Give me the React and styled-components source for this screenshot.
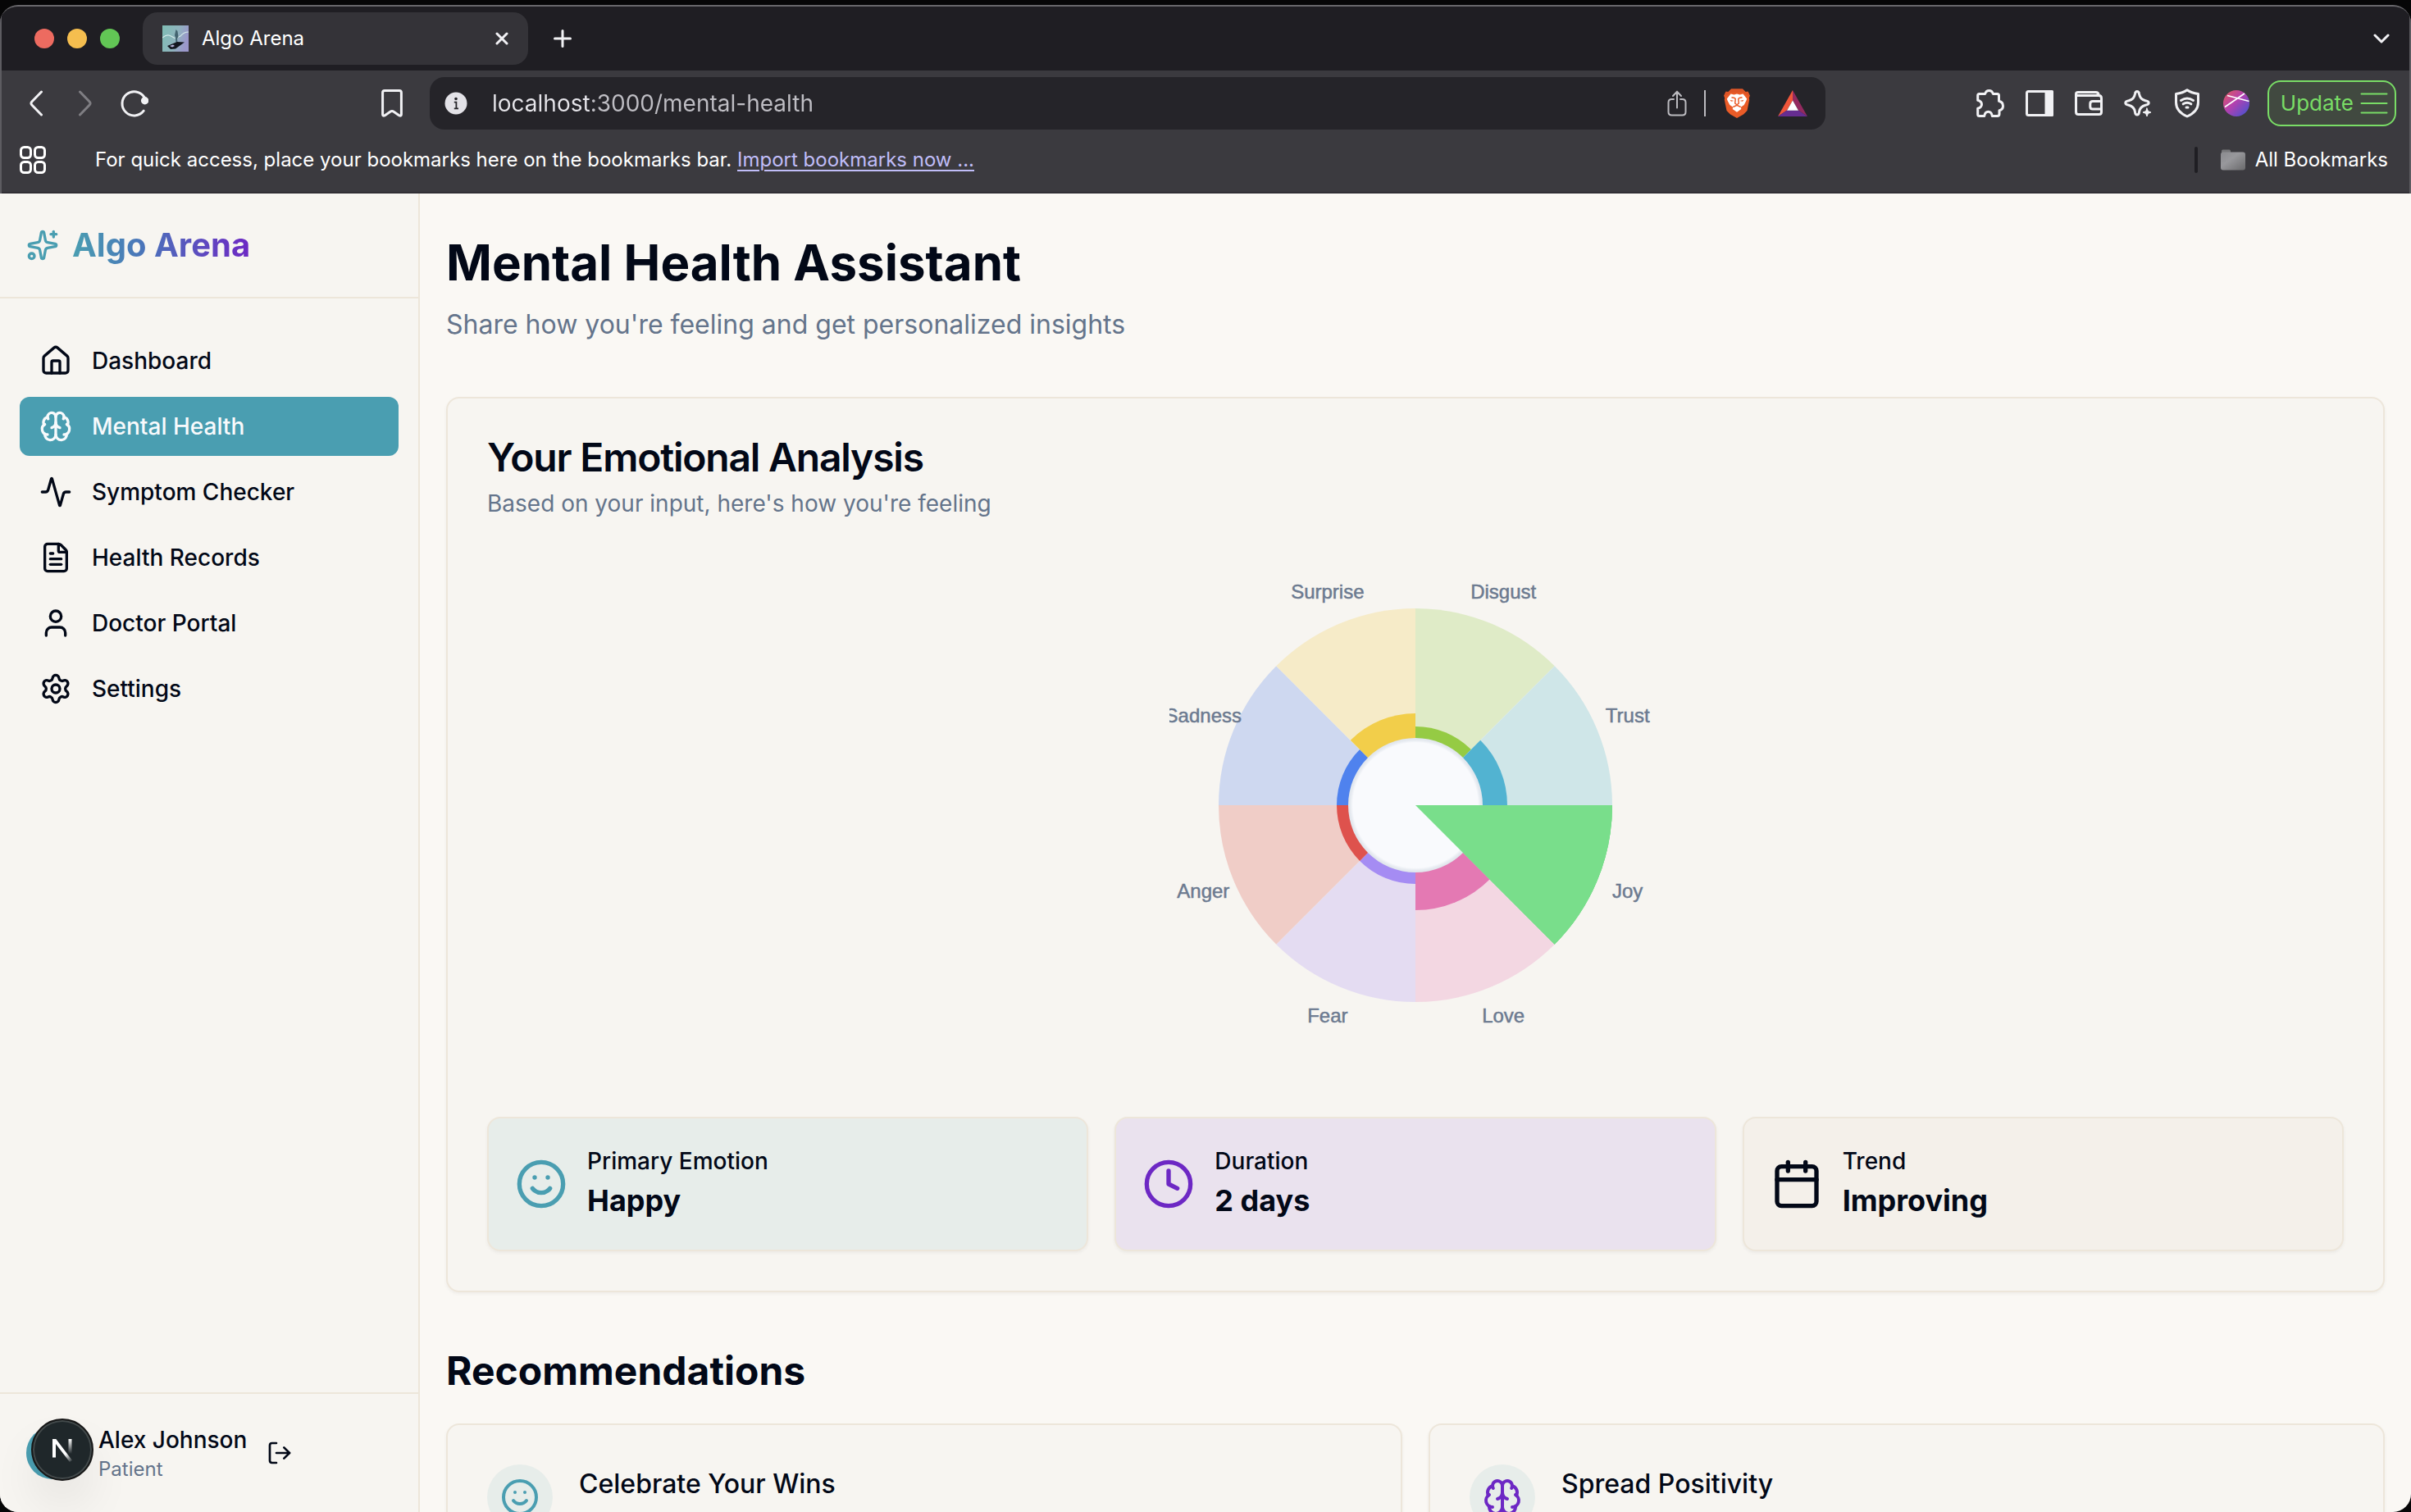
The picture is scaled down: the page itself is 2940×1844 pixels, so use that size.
import React from "react";
import styled, { createGlobalStyle, css } from "styled-components";
import {
  Activity,
  Brain,
  Calendar,
  Clock,
  FileText,
  House,
  LogOut,
  Settings,
  Smile,
  Sparkles,
  User,
} from "lucide-react";

const color = {
  ink: "#020817",
  muted: "#64748b",
  teal: "#4a9eb1",
  purple: "#6d28c4",
  page: "#faf8f4",
  panel: "#f7f5f1",
  line: "#ede6da",
  chromeDark: "#1f1e23",
  chrome: "#3b3a3f",
  field: "#252429",
  green: "#79dd66",
};

const GlobalStyle = createGlobalStyle`
  *, *::before, *::after { box-sizing: border-box; }
  html, body { margin: 0; background: #060607; overflow: hidden; }
  body { font-family: Inter, "Liberation Sans", sans-serif; color: ${color.ink}; }
  h1, h2, h3, p, ul { margin: 0; padding: 0; }
  a { color: inherit; text-decoration: none; }
  button, input { font: inherit; color: inherit; border: 0; background: none; padding: 0; margin: 0; }
  svg { display: block; flex: none; }
`;

const Screen = styled.div`
  height: 100vh;
  padding-top: 6px;
  overflow: hidden;
`;

const BrowserWindow = styled.div`
  height: 100%;
  display: flex;
  flex-direction: column;
  border-top: 2px solid #68676b;
  border-radius: 22px;
  overflow: hidden;
  background: ${color.chrome};
`;

/* Browser chrome */

const ChromeFrame = styled.header`
  flex: none;
  border: solid #5d5c61;
  border-width: 0 2px;
`;

const TabStrip = styled.div`
  height: 78px;
  padding: 0 12px 0 40px;
  display: flex;
  align-items: center;
  background: ${color.chromeDark};
`;

const Lights = styled.div`
  display: flex;
  gap: 16px;
`;

const Light = styled.span`
  width: 24px;
  height: 24px;
  border-radius: 50%;
  background: ${(p) => p.$fill};
`;

const Tab = styled.div`
  width: 470px;
  height: 64px;
  margin: 0 20px 0 28px;
  padding: 0 16px 0 24px;
  border-radius: 18px;
  background: #343338;
  display: flex;
  align-items: center;
  gap: 16px;
`;

const TabTitle = styled.span`
  flex: 1;
  font-size: 24px;
  line-height: 32px;
  color: #fff;
`;

const IconButton = styled.button`
  flex: none;
  width: ${(p) => p.$size || 60}px;
  height: ${(p) => p.$size || 60}px;
  display: grid;
  place-items: center;
  color: ${(p) => (p.$dim ? "#7f7e83" : "#f1f1f4")};
`;

const Push = styled.span`
  flex: 1;
`;

const Toolbar = styled.div`
  height: 80px;
  padding: 0 16px 0 12px;
  display: flex;
  align-items: center;
`;

const ToolbarStart = styled.div`
  width: 510px;
  flex: none;
  padding-right: 16px;
  display: flex;
`;

const ToolbarEnd = styled.div`
  width: 696px;
  flex: none;
  display: flex;
  align-items: center;
  justify-content: flex-end;
`;

const AddressBar = styled.form`
  flex: 1;
  min-width: 0;
  height: 64px;
  padding: 0 10px 0 18px;
  border-radius: 18px;
  background: ${color.field};
  display: flex;
  align-items: center;
`;

/* The host part of the address is brighter than the path. */
const AddressInput = styled.input`
  flex: 1;
  min-width: 0;
  margin-left: 30px;
  height: 40px;
  font-size: 28px;
  line-height: 40px;
  outline: none;
  background: linear-gradient(90deg, #e6e5ea 122px, #bfbec4 122px);
  background-clip: text;
  -webkit-background-clip: text;
  -webkit-text-fill-color: transparent;
`;

const AddressButton = styled.button`
  height: 40px;
  width: ${(p) => p.$width}px;
  display: grid;
  place-items: center;
  color: #bcbbc0;
`;

const AddressRule = styled.span`
  width: 2px;
  height: 32px;
  background: #bcbbc0;
`;

const UpdateButton = styled.button`
  height: 56px;
  margin-left: 8px;
  padding: 0 8px 0 14px;
  border: 2px solid ${color.green};
  border-radius: 16px;
  background: #414940;
  color: ${color.green};
  font-size: 26px;
  line-height: 32px;
  display: flex;
  align-items: center;
  gap: 8px;
`;

const BookmarksBar = styled.div`
  height: 70px;
  padding: 0 26px 10px 22px;
  border-bottom: 2px solid #312f35;
  display: flex;
  align-items: center;
  font-size: 24px;
  line-height: 32px;
  color: #fff;
`;

const BookmarkHint = styled.p`
  margin-left: 60px;
`;

const ImportLink = styled.a`
  color: #c0bdf8;
  text-decoration: underline;
  text-underline-offset: 4px;
  text-decoration-thickness: 2px;
`;

const BarRule = styled.span`
  width: 4px;
  height: 32px;
  margin-right: 28px;
  border-radius: 2px;
  background: ${color.chromeDark};
`;

const AllBookmarks = styled.button`
  display: flex;
  align-items: center;
  gap: 12px;
`;

/* Page */

const Page = styled.div`
  flex: 1;
  min-height: 0;
  display: flex;
  background: ${color.page};
`;

const Sidebar = styled.aside`
  width: 512px;
  flex: none;
  display: flex;
  flex-direction: column;
  background: ${color.panel};
  border-right: 2px solid ${color.line};
`;

const Brand = styled.a`
  height: 128px;
  padding: 0 32px;
  display: flex;
  align-items: center;
  gap: 16px;
  color: ${color.teal};
  border-bottom: 2px solid ${color.line};
`;

const BrandName = styled.span`
  font-size: 40px;
  line-height: 56px;
  font-weight: 700;
  color: transparent;
  background: linear-gradient(90deg, ${color.teal}, #4a74ba 40%, ${color.purple});
  background-clip: text;
  -webkit-background-clip: text;
`;

const Nav = styled.nav`
  flex: 1;
  padding: 40px 24px;
  display: flex;
  flex-direction: column;
  gap: 8px;
`;

const NavLink = styled.a`
  height: 72px;
  padding: 0 24px;
  display: flex;
  align-items: center;
  gap: 24px;
  border-radius: 12px;
  font-size: 28px;
  line-height: 40px;
  font-weight: 500;
  ${(p) =>
    p.$active &&
    css`
      background: ${color.teal};
      color: #f8fafc;
    `}
`;

const Account = styled.div`
  padding: 32px;
  display: flex;
  align-items: center;
  border-top: 2px solid ${color.line};
`;

const Avatar = styled.div`
  position: relative;
  width: 64px;
  height: 64px;
  margin-right: 24px;
  border-radius: 50%;
  background: ${color.teal};
`;

const DevBadge = styled.button`
  position: absolute;
  left: 6px;
  top: -10px;
  width: 76px;
  height: 76px;
  border-radius: 50%;
  border: 2px solid #171717;
  background: #1f272a;
  box-shadow: inset 0 0 0 2px #434a4b, 0 32px 64px -16px rgba(0, 0, 0, 0.2);
  display: grid;
  place-items: center;
`;

const AccountName = styled.p`
  font-size: 28px;
  line-height: 40px;
  font-weight: 500;
`;

const AccountRole = styled.p`
  font-size: 24px;
  line-height: 32px;
  color: ${color.muted};
`;

const LogoutButton = styled(IconButton)`
  color: ${color.ink};
`;

const Main = styled.main`
  flex: 1;
  min-width: 0;
  padding: 48px 32px;
  overflow: hidden;
`;

const PageTitle = styled.h1`
  font-size: 60px;
  line-height: 72px;
  font-weight: 700;
`;

const PageIntro = styled.p`
  margin: 16px 0 64px;
  font-size: 32px;
  line-height: 48px;
  color: ${color.muted};
`;

const Card = styled.section`
  border: 2px solid ${color.line};
  border-radius: 16px;
  background: ${(p) => p.$fill || color.panel};
  box-shadow: 0 2px 4px rgba(0, 0, 0, 0.05);
  padding: ${(p) => p.$pad || 48}px;
`;

const CardTitle = styled.h2`
  font-size: 48px;
  line-height: 48px;
  font-weight: 600;
  letter-spacing: -0.025em;
`;

const CardNote = styled.p`
  margin: 12px 0 48px;
  font-size: 28px;
  line-height: 40px;
  color: ${color.muted};
`;

const ChartBox = styled.div`
  display: flex;
  justify-content: center;
  margin-bottom: 80px;
`;

const ChartLabel = styled.text`
  font-family: "Liberation Sans", Arial, sans-serif;
  font-size: 24px;
  fill: #6c7a90;
  stroke: #6c7a90;
  stroke-width: 0.5;
  text-anchor: middle;
  dominant-baseline: middle;
`;

const Grid = styled.div`
  display: grid;
  grid-template-columns: repeat(${(p) => p.$cols}, minmax(0, 1fr));
  gap: 32px;
`;

const StatRow = styled.div`
  display: flex;
  align-items: center;
  gap: 24px;
  color: ${(p) => p.$tone};
`;

const StatLabel = styled.p`
  font-size: 28px;
  line-height: 40px;
  font-weight: 500;
  color: ${color.ink};
`;

const StatValue = styled.p`
  font-size: 36px;
  line-height: 56px;
  font-weight: 700;
  color: ${color.ink};
`;

const SectionTitle = styled.h2`
  margin: 64px 0 32px;
  font-size: 48px;
  line-height: 64px;
  font-weight: 700;
`;

const TipRow = styled.div`
  display: flex;
  align-items: flex-start;
  gap: 32px;
`;

const TipIcon = styled.div`
  flex: none;
  width: 80px;
  height: 80px;
  border-radius: 50%;
  display: grid;
  place-items: center;
  background: #e7edea;
  color: ${(p) => p.$tone};
`;

const TipTitle = styled.h3`
  font-size: 32px;
  line-height: 48px;
  font-weight: 500;
`;

/* Emotion wheel */

const emotions = [
  { name: "Joy", pale: "#79de8b", strong: "#79de8b", reach: 240 },
  { name: "Love", pale: "#f3d7e2", strong: "#e479b3", reach: 128 },
  { name: "Fear", pale: "#e4dcf2", strong: "#a58cf3", reach: 96 },
  { name: "Anger", pale: "#f0cdc7", strong: "#de524d", reach: 96 },
  { name: "Sadness", pale: "#ced8f0", strong: "#4f82ee", reach: 96 },
  { name: "Surprise", pale: "#f6ebc8", strong: "#f2ce4a", reach: 112 },
  { name: "Disgust", pale: "#dfebc7", strong: "#95cb44", reach: 96 },
  { name: "Trust", pale: "#cfe6e8", strong: "#52b3d1", reach: 112 },
];

const point = (radius, degrees) => {
  const a = (degrees * Math.PI) / 180;
  return `${(300 + radius * Math.cos(a)).toFixed(2)} ${(300 + radius * Math.sin(a)).toFixed(2)}`;
};

const wedge = (radius, index) =>
  `M300 300L${point(radius, index * 45)}A${radius} ${radius} 0 0 1 ${point(radius, index * 45 + 45)}Z`;

function EmotionWheel() {
  return (
    <svg width="600" height="600" viewBox="0 0 600 600" role="img" aria-label="Emotion wheel">
      <defs>
        <radialGradient id="hub" cx="300" cy="300" r="82" gradientUnits="userSpaceOnUse">
          <stop offset="0.93" stopColor="#f9fafd" />
          <stop offset="0.97" stopColor="#e6eaf0" />
          <stop offset="1" stopColor="#dfe5ec" />
        </radialGradient>
      </defs>
      {emotions.map((e, i) => (
        <path key={e.name} d={wedge(240, i)} fill={e.pale} />
      ))}
      {emotions.map((e, i) => (
        <path key={e.name} d={wedge(e.reach, i)} fill={e.strong} />
      ))}
      <circle cx="300" cy="300" r="82" fill="url(#hub)" />
      <path d={wedge(240, 0)} fill={emotions[0].strong} />
      {emotions.map((e, i) => {
        const [x, y] = point(280, i * 45 + 22.5).split(" ");
        return (
          <ChartLabel key={e.name} x={x} y={y}>
            {e.name}
          </ChartLabel>
        );
      })}
    </svg>
  );
}

/* Browser icons */

const Line = ({ w = 34, h = w, box = `0 0 ${w} ${h}`, sw = 3, children }) => (
  <svg
    width={w}
    height={h}
    viewBox={box}
    fill="none"
    stroke="currentColor"
    strokeWidth={sw}
    strokeLinecap="round"
    strokeLinejoin="round"
    aria-hidden="true"
  >
    {children}
  </svg>
);

const BackIcon = () => (
  <Line w={16} h={32}>
    <path d="M14.5 2L2.6 14.3q-1.3 1.7 0 3.4L14.5 30" />
  </Line>
);
const ForwardIcon = () => (
  <Line w={16} h={32}>
    <path d="M1.5 2L13.4 14.3q1.3 1.7 0 3.4L1.5 30" />
  </Line>
);
const ReloadIcon = () => (
  <Line w={34}>
    <path d="M28.2 26.2A14.6 14.6 0 1 1 29 9.6L30.5 13" />
    <circle cx="29.6" cy="13.8" r="3.2" fill="currentColor" />
  </Line>
);
const BookmarkIcon = () => (
  <Line w={26} h={34}>
    <path d="M4 1.6h18q2.4 0 2.4 2.4v26.5q0 2.4-2.4 1.4L15.5 27.4q-2.5-1.6-5 0L4 31.9q-2.4 1-2.4-1.4V4Q1.6 1.6 4 1.6z" />
  </Line>
);
const GridIcon = () => (
  <Line w={32} h={34}>
    <rect x="1.5" y="1.5" width="12" height="13" rx="4" />
    <rect x="18.5" y="1.5" width="12" height="13" rx="4" />
    <rect x="1.5" y="19.5" width="12" height="13" rx="4" />
    <rect x="18.5" y="19.5" width="12" height="13" rx="4" />
  </Line>
);
const InfoIcon = () => (
  <svg width="28" height="28" viewBox="0 0 28 28" aria-hidden="true">
    <circle cx="14" cy="14" r="13.5" fill="#e3e2e7" />
    <circle cx="14" cy="8.5" r="1.8" fill="#252429" />
    <path d="M11.8 12.7H14.4V20.3M11.8 20.3H17" stroke="#252429" strokeWidth="1.8" fill="none" />
  </svg>
);
const ShareIcon = () => (
  <Line w={24} h={32} sw={2}>
    <path d="M8 11H5.5Q1.5 11 1.5 15v11.5Q1.5 30.5 5.5 30.5h13q4 0 4-4V15q0-4-4-4H16M12 21.500V1.800M7 7l5-5.300L17 7" />
  </Line>
);
const BraveIcon = () => (
  <svg width="32" height="36" viewBox="0 0 32 36" aria-hidden="true">
    <path d="M9 0.5h14l3.5 3.5 3-0.3 2.300 5-1 3 0.400 2L28.500 27 24 31.500 16 36 8 31.500 3.500 27 0.800 13.700l0.400-2-1-3 2.300-5L5.500 4z" fill="#ea5c28" />
    <path d="M9 0.500h14l3.500 3.500 3-0.300 2.300 5-2 0.500L24 5H8L2.200 9.200l-2-0.500 2.300-5L5.500 4z" fill="#dd5527" />
    <path d="M8.500 6.500l4 0.900 3.500-0.900 3.500 0.900 4-0.900 4.700 6-0.900 2.600-2.600 4.800-4 2.800 0.600 2.300L16 28.800 10.700 25l0.600-2.300L7.300 19.900l-2.600-4.800L3.800 12.500z" fill="#fff" />
    <path d="M9.500 10.800l3.500 0.700 1.200 1-0.500 5.500 2.300 1.800 2.300-1.800-0.500-5.500 1.200-1 3.500-0.700M11.300 22.500L16 20.300l4.700 2.200" fill="none" stroke="#ea5c28" strokeWidth="1.500" />
    <path d="M7.500 13.800l5 1.300-3.500 0.600zM24.500 13.800l-5 1.300 3.500 0.600z" fill="#ea5c28" />
  </svg>
);
const RewardsIcon = () => (
  <svg width="36" height="32" viewBox="0 0 36 32" aria-hidden="true">
    <path d="M18 0L0 32l11-7.500L18 12.500z" fill="#f0563a" />
    <path d="M18 0l18 32-11-7.500L18 12.500z" fill="#932a5f" />
    <path d="M0 32h36l-11-7.500H11z" fill="#662d91" />
    <path d="M18 12.500l7 12.300H11z" fill="#fff" />
  </svg>
);
const PuzzleIcon = () => (
  <Line w={34} h={34}>
    <path d="M3.500 5.500h7.200q1-4 4.800-4t4.800 4h5.200q2 0 2 2v6.800q5 1.200 5 6 0 4.300-4.500 5.500v4.200q0 2.500-2.500 2.500h-6.200q-0.700-5.300-4.800-5.300t-4.800 5.300H3.700q-2 0-2-2v-7.200q4.800-1.300 4.800-5t-4.800-5V7.500q0-2 1.800-2z" />
  </Line>
);
const PanelIcon = () => (
  <Line w={34} h={32}>
    <rect x="1.500" y="1.500" width="31" height="29" rx="2" />
    <path d="M25 1.500h7.500v29H25z" fill="currentColor" />
  </Line>
);
const WalletIcon = () => (
  <Line w={34} h={30}>
    <path d="M1.500 4v21.500q0 3 3 3h25q3 0 3-3V9q0-3.500-3-3.500H4Q1.500 5.500 1.500 3.500T4 1.500h21.500q3.500 0 3.800 4M32.500 12.500H21.800q-3 0-3 3V19q0 3 3 3h10.700" />
  </Line>
);
const StarIcon = () => (
  <Line w={34}>
    <path d="M16 2.500q2.200 0 2.600 3.200 1 6.400 7.600 8 4 0.800 4 2.800t-4 2.800q-6.600 1.600-7.600 8-0.400 3.700-2.600 3.700t-2.600-3.700q-1-6.400-7.600-8-4-0.800-4-2.800t4-2.800q6.600-1.600 7.600-8Q13.800 2.500 16 2.500z" />
    <path d="M28 23l1.400 3.600L33 28l-3.600 1.400L28 33l-1.400-3.600L23 28l3.600-1.400z" fill="currentColor" strokeWidth="1" />
  </Line>
);
const VpnIcon = () => (
  <Line w={30} h={36}>
    <path d="M15 1.800q5 3.800 13.500 4.700v10.500q0 11-13.500 17Q1.500 28 1.500 17V6.500Q10 5.600 15 1.800z" />
    <path d="M7.500 14.500q7.500-5 15 0M10.200 18.800q4.800-3.200 9.600 0M14 23h2" />
  </Line>
);
const ProfileIcon = () => (
  <svg width="32" height="32" viewBox="0 0 32 32" aria-hidden="true">
    <defs>
      <linearGradient id="profile" x1="0" y1="0" x2="1" y2="1">
        <stop offset="0.100" stopColor="#d8566c" />
        <stop offset="0.450" stopColor="#b440ae" />
        <stop offset="0.950" stopColor="#4653d2" />
      </linearGradient>
    </defs>
    <circle cx="16" cy="16" r="16" fill="url(#profile)" />
    <path d="M5 6.500L31.500 13.500M2 20.500L26 4" stroke="#fff" strokeWidth="1.600" />
  </svg>
);
const MenuLines = () => (
  <Line w={34} h={26} sw={2}>
    <path d="M1.500 1.500h31M1.500 13h31M1.500 24.500h31" />
  </Line>
);
const CloseIcon = () => (
  <Line w={16} h={16}>
    <path d="M2 2l12 12M14 2L2 14" />
  </Line>
);
const PlusIcon = () => (
  <Line w={22} h={22}>
    <path d="M11 1.500v19M1.500 11h19" />
  </Line>
);
const ChevronIcon = () => (
  <Line w={20} h={12}>
    <path d="M2 2l8 8 8-8" />
  </Line>
);
const FolderIcon = () => (
  <svg width="30" height="26" viewBox="0 0 30 26" aria-hidden="true">
    <defs>
      <linearGradient id="folder" x1="0" y1="0" x2="1" y2="1">
        <stop offset="0" stopColor="#8b8b8f" />
        <stop offset="0.400" stopColor="#98989c" />
        <stop offset="1" stopColor="#69696b" />
      </linearGradient>
    </defs>
    <path d="M1 6V2q0-1.500 1.500-1.500h8q1.500 0 1.500 2V6z" fill="#77777a" />
    <rect y="3.500" width="30" height="22" rx="3" fill="url(#folder)" />
  </svg>
);
const Favicon = () => (
  <svg width="32" height="32" viewBox="0 0 32 32" aria-hidden="true">
    <defs>
      <linearGradient id="fav" x1="0" y1="0" x2="1" y2="0.300">
        <stop offset="0" stopColor="#7fbdb4" />
        <stop offset="0.600" stopColor="#8fb4bd" />
        <stop offset="1" stopColor="#9b98cb" />
      </linearGradient>
    </defs>
    <rect width="32" height="32" fill="url(#fav)" />
    <path d="M0 15q5-4 8-3t6 3q3 1 8-2 4-5 10-5" fill="none" stroke="#d5ebea" strokeWidth="1.200" />
    <path d="M16.500 5l2 2 1 7-1.500 2 0.500 5h-2l-0.500-6-1-3z" fill="#43636f" />
    <path d="M6 25l12-5 9 0.500-11 8-6 0.500z" fill="#14171f" />
    <path d="M9 25l4-1.500 2 1.500-3 1.500z" fill="#b9b7dd" />
  </svg>
);
const NextMark = () => (
  <svg width="28" height="30" viewBox="0 0 28 30" aria-hidden="true">
    <defs>
      <linearGradient id="nextStem" x1="0" y1="0" x2="0" y2="1">
        <stop offset="0" stopColor="#fff" />
        <stop offset="1" stopColor="#fff" stopOpacity="0" />
      </linearGradient>
      <linearGradient id="nextSlash" x1="3" y1="2" x2="26" y2="30" gradientUnits="userSpaceOnUse">
        <stop offset="0.650" stopColor="#fff" />
        <stop offset="1" stopColor="#fff" stopOpacity="0" />
      </linearGradient>
    </defs>
    <rect x="21.500" y="2" width="4" height="18" fill="url(#nextStem)" />
    <path d="M2 24.500V2h4.300L26 28l-3 2L6 8v16.500z" fill="url(#nextSlash)" />
  </svg>
);

const navItems = [
  { label: "Dashboard", icon: House, href: "#dashboard" },
  { label: "Mental Health", icon: Brain, href: "#mental-health", active: true },
  { label: "Symptom Checker", icon: Activity, href: "#symptom-checker" },
  { label: "Health Records", icon: FileText, href: "#health-records" },
  { label: "Doctor Portal", icon: User, href: "#doctor-portal" },
  { label: "Settings", icon: Settings, href: "#settings" },
];

const stats = [
  { label: "Primary Emotion", value: "Happy", icon: Smile, tone: color.teal, fill: "#e7edea" },
  { label: "Duration", value: "2 days", icon: Clock, tone: color.purple, fill: "#eae2ee" },
  { label: "Trend", value: "Improving", icon: Calendar, tone: color.ink, fill: "#f4f0ea" },
];

const tips = [
  { title: "Celebrate Your Wins", icon: Smile, tone: color.teal },
  { title: "Spread Positivity", icon: Brain, tone: color.purple },
];

const extensions = [
  ["Extensions", PuzzleIcon],
  ["Side panel", PanelIcon],
  ["Wallet", WalletIcon],
  ["Assistant", StarIcon],
  ["VPN", VpnIcon],
  ["Profile", ProfileIcon],
];

function BrowserChrome() {
  return (
    <ChromeFrame>
      <TabStrip>
        <Lights>
          <Light $fill="#ed6b60" />
          <Light $fill="#f5be4f" />
          <Light $fill="#62c655" />
        </Lights>
        <Tab>
          <Favicon />
          <TabTitle>Algo Arena</TabTitle>
          <IconButton $size={32} aria-label="Close tab">
            <CloseIcon />
          </IconButton>
        </Tab>
        <IconButton $size={44} aria-label="New tab">
          <PlusIcon />
        </IconButton>
        <Push />
        <IconButton $size={44} aria-label="Search tabs">
          <ChevronIcon />
        </IconButton>
      </TabStrip>
      <Toolbar>
        <ToolbarStart>
          <IconButton aria-label="Back">
            <BackIcon />
          </IconButton>
          <IconButton $dim aria-label="Forward">
            <ForwardIcon />
          </IconButton>
          <IconButton aria-label="Reload">
            <ReloadIcon />
          </IconButton>
          <Push />
          <IconButton aria-label="Bookmark this page">
            <BookmarkIcon />
          </IconButton>
        </ToolbarStart>
        <AddressBar onSubmit={(e) => e.preventDefault()}>
          <InfoIcon />
          <AddressInput aria-label="Address" defaultValue="localhost:3000/mental-health" />
          <AddressButton type="button" $width={66} aria-label="Share">
            <ShareIcon />
          </AddressButton>
          <AddressRule />
          <AddressButton type="button" $width={76} aria-label="Brave Shields">
            <BraveIcon />
          </AddressButton>
          <AddressButton type="button" $width={60} aria-label="Brave Rewards">
            <RewardsIcon />
          </AddressButton>
        </AddressBar>
        <ToolbarEnd>
          {extensions.map(([name, Icon]) => (
            <IconButton key={name} aria-label={name}>
              <Icon />
            </IconButton>
          ))}
          <UpdateButton>
            Update
            <MenuLines />
          </UpdateButton>
        </ToolbarEnd>
      </Toolbar>
      <BookmarksBar>
        <GridIcon />
        <BookmarkHint>
          For quick access, place your bookmarks here on the bookmarks bar.{" "}
          <ImportLink href="#import">Import bookmarks now ...</ImportLink>
        </BookmarkHint>
        <Push />
        <BarRule />
        <AllBookmarks>
          <FolderIcon />
          All Bookmarks
        </AllBookmarks>
      </BookmarksBar>
    </ChromeFrame>
  );
}

export default function App() {
  return (
    <Screen>
      <GlobalStyle />
      <BrowserWindow>
        <BrowserChrome />
        <Page>
          <Sidebar>
            <Brand href="#home">
              <Sparkles size={40} />
              <BrandName>Algo Arena</BrandName>
            </Brand>
            <Nav>
              {navItems.map(({ label, icon: Icon, href, active }) => (
                <NavLink key={label} href={href} $active={active}>
                  <Icon size={40} />
                  {label}
                </NavLink>
              ))}
            </Nav>
            <Account>
              <Avatar>
                <DevBadge aria-label="Open developer tools">
                  <NextMark />
                </DevBadge>
              </Avatar>
              <div>
                <AccountName>Alex Johnson</AccountName>
                <AccountRole>Patient</AccountRole>
              </div>
              <LogoutButton $size={80} aria-label="Log out">
                <LogOut size={32} />
              </LogoutButton>
            </Account>
          </Sidebar>
          <Main>
            <PageTitle>Mental Health Assistant</PageTitle>
            <PageIntro>Share how you're feeling and get personalized insights</PageIntro>
            <Card>
              <CardTitle>Your Emotional Analysis</CardTitle>
              <CardNote>Based on your input, here's how you're feeling</CardNote>
              <ChartBox>
                <EmotionWheel />
              </ChartBox>
              <Grid $cols={3}>
                {stats.map(({ label, value, icon: Icon, tone, fill }) => (
                  <Card as="div" key={label} $fill={fill} $pad={32}>
                    <StatRow $tone={tone}>
                      <Icon size={64} />
                      <div>
                        <StatLabel>{label}</StatLabel>
                        <StatValue>{value}</StatValue>
                      </div>
                    </StatRow>
                  </Card>
                ))}
              </Grid>
            </Card>
            <SectionTitle>Recommendations</SectionTitle>
            <Grid $cols={2}>
              {tips.map(({ title, icon: Icon, tone }) => (
                <Card as="article" key={title}>
                  <TipRow>
                    <TipIcon $tone={tone}>
                      <Icon size={48} />
                    </TipIcon>
                    <TipTitle>{title}</TipTitle>
                  </TipRow>
                </Card>
              ))}
            </Grid>
          </Main>
        </Page>
      </BrowserWindow>
    </Screen>
  );
}
